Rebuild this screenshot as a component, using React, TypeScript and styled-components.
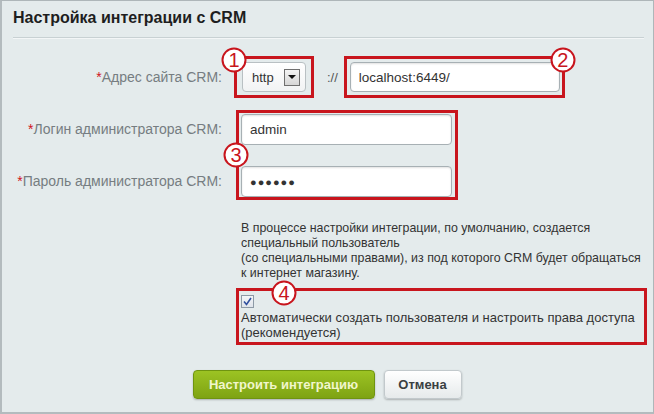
import React from 'react';
import styled, { createGlobalStyle } from 'styled-components';

const RED = '#c8151d';

const GlobalStyle = createGlobalStyle`
  html, body {
    margin: 0;
    padding: 0;
  }
  body {
    font-family: 'Liberation Sans', Arial, sans-serif;
    background: #e4ebec;
  }
`;

const Panel = styled.div`
  box-sizing: border-box;
  width: 654px;
  height: 414px;
  background: #e4ebec;
  border: 1px solid #aeb6b9;
  border-left: 2px solid #b3bbbe;
  border-bottom: 2px solid #b3bbbe;
`;

const Title = styled.h1`
  margin: 0 9px 0 11px;
  padding: 7px 0 9px;
  font-size: 16px;
  line-height: 20px;
  font-weight: bold;
  color: #1e1e1e;
  border-bottom: 1px solid #c8d1d3;
  box-shadow: 0 1px 0 #f3f6f7;
`;

const Form = styled.div`
  padding-top: 18px;
`;

const Row = styled.div`
  display: flex;
  align-items: center;
`;

const Group = styled.div`
  display: flex;
  align-items: flex-start;
  margin-top: 12px;
`;

const LabelColumn = styled.div`
  display: flex;
  flex-direction: column;
  gap: 21px;
  padding-top: 4px;
`;

const Label = styled.div`
  width: 220px;
  height: 31px;
  line-height: 31px;
  text-align: right;
  font-size: 14px;
  color: #767d81;
  white-space: nowrap;
`;

const Star = styled.span`
  color: #d0141c;
`;

const Highlight = styled.div<{ $pad: string; $gap?: number; $left?: number; $top?: number; $width?: number }>`
  position: relative;
  box-sizing: border-box;
  display: flex;
  flex-direction: column;
  gap: ${(p) => p.$gap ?? 0}px;
  padding: ${(p) => p.$pad};
  margin-left: ${(p) => p.$left ?? 0}px;
  margin-top: ${(p) => p.$top ?? 0}px;
  width: ${(p) => (p.$width ? `${p.$width}px` : 'auto')};
  border: 3px solid ${RED};
`;

const Badge = styled.span<{ $x: string; $y: string }>`
  position: absolute;
  left: ${(p) => p.$x};
  top: ${(p) => p.$y};
  transform: translate(-50%, -50%);
  box-sizing: border-box;
  width: 25px;
  height: 25px;
  border-radius: 50%;
  border: 2px solid ${RED};
  background: #ffffff;
  color: ${RED};
  font-size: 20px;
  line-height: 21px;
  text-align: center;
  z-index: 2;
`;

const Select = styled.div`
  box-sizing: border-box;
  width: 64px;
  height: 30px;
  display: flex;
  align-items: center;
  justify-content: space-between;
  padding: 0 5px 0 9px;
  border: 1px solid #b9c0c3;
  border-radius: 4px;
  background: linear-gradient(#ffffff, #f1f3f4);
  font-size: 13px;
  color: #333;
`;

const SelectArrow = styled.span`
  box-sizing: border-box;
  width: 16px;
  height: 17px;
  border: 1px solid #6f6f6f;
  background: linear-gradient(#f4f4f4, #d6d6d6);
  display: flex;
  align-items: center;
  justify-content: center;

  &::after {
    content: '';
    border-left: 4px solid transparent;
    border-right: 4px solid transparent;
    border-top: 4px solid #111;
  }
`;

const Scheme = styled.span`
  margin: 0 6px 0 13px;
  font-size: 13px;
  color: #555;
`;

const Input = styled.div<{ $width: number; $height: number }>`
  box-sizing: border-box;
  width: ${(p) => p.$width}px;
  height: ${(p) => p.$height}px;
  display: flex;
  align-items: center;
  padding-left: 8px;
  border: 1px solid #a7b0b4;
  border-radius: 4px;
  background: #fff;
  box-shadow: inset 0 1px 2px rgba(0, 0, 0, 0.12);
  font-size: 13.5px;
  color: #333;
`;

const Dots = styled.span`
  font-size: 11px;
  letter-spacing: 1px;
  color: #333;
`;

const Extra = styled.div`
  margin-left: 234px;
`;

const Note = styled.p`
  margin: 21px 0 0;
  padding-left: 5px;
  font-size: 12.4px;
  line-height: 15px;
  color: #333;
  white-space: nowrap;
`;

const Checkbox = styled.span`
  box-sizing: border-box;
  width: 13px;
  height: 13px;
  margin-bottom: 2px;
  border: 1px solid #8d9aa6;
  background: linear-gradient(#f3f5f8, #dfe4ea);
  display: flex;
  align-items: center;
  justify-content: center;
`;

const CheckText = styled.div`
  font-size: 13px;
  line-height: 15px;
  color: #333;
  white-space: nowrap;
`;

const Buttons = styled.div`
  display: flex;
  justify-content: center;
  gap: 9px;
  margin-top: 25px;
  padding-right: 1px;
`;

const Button = styled.button<{ $primary?: boolean }>`
  box-sizing: border-box;
  height: 29px;
  padding: 0;
  width: ${(p) => (p.$primary ? 182 : 78)}px;
  border-radius: 4px;
  font-family: 'Liberation Sans', Arial, sans-serif;
  font-size: 13px;
  font-weight: bold;
  cursor: pointer;
  border: 1px solid ${(p) => (p.$primary ? '#6f9410' : '#c2c9cc')};
  color: ${(p) => (p.$primary ? '#f1f6cc' : '#3a3f42')};
  background: ${(p) =>
    p.$primary ? 'linear-gradient(#9cc323, #7ea313)' : 'linear-gradient(#ffffff, #e6eaeb)'};
  box-shadow: 0 1px 2px rgba(0, 0, 0, 0.25);
`;

export default function App() {
  return (
    <>
      <GlobalStyle />
      <Panel>
        <Title>Настройка интеграции с CRM</Title>
        <Form>
          <Row>
            <Label>
              <Star>*</Star>Адрес сайта CRM:
            </Label>
            <Highlight $pad="3px 5px" $left={12}>
              <Badge $x="-3px" $y="1px">1</Badge>
              <Select>
                http
                <SelectArrow />
              </Select>
            </Highlight>
            <Scheme>://</Scheme>
            <Highlight $pad="3px 2px 3px 3px">
              <Badge $x="calc(100% + 1px)" $y="1px">2</Badge>
              <Input $width={210} $height={30}>localhost:6449/</Input>
            </Highlight>
          </Row>

          <Group>
            <LabelColumn>
              <Label>
                <Star>*</Star>Логин администратора CRM:
              </Label>
              <Label>
                <Star>*</Star>Пароль администратора CRM:
              </Label>
            </LabelColumn>
            <Highlight $pad="1px 3px 0 2px" $gap={21} $left={14}>
              <Badge $x="-3px" $y="50%">3</Badge>
              <Input $width={211} $height={31}>admin</Input>
              <Input $width={211} $height={31}>
                <Dots>●●●●●●</Dots>
              </Input>
            </Highlight>
          </Group>

          <Extra>
            <Note>
              В процессе настройки интеграции, по умолчанию, создается
              <br />
              специальный пользователь
              <br />
              (со специальными правами), из под которого CRM будет обращаться
              <br />
              к интернет магазину.
            </Note>
            <Highlight $pad="4px 2px 2px 2px" $top={7} $width={411}>
              <Badge $x="45px" $y="2px">4</Badge>
              <Checkbox>
                <svg width="9" height="9" viewBox="0 0 9 9">
                  <path d="M1 4.5 L3.5 7.5 L8 1" fill="none" stroke="#2f4f9e" strokeWidth="1.6" />
                </svg>
              </Checkbox>
              <CheckText>
                Автоматически создать пользователя и настроить права доступа
                <br />
                (рекомендуется)
              </CheckText>
            </Highlight>
          </Extra>

          <Buttons>
            <Button $primary>Настроить интеграцию</Button>
            <Button>Отмена</Button>
          </Buttons>
        </Form>
      </Panel>
    </>
  );
}
